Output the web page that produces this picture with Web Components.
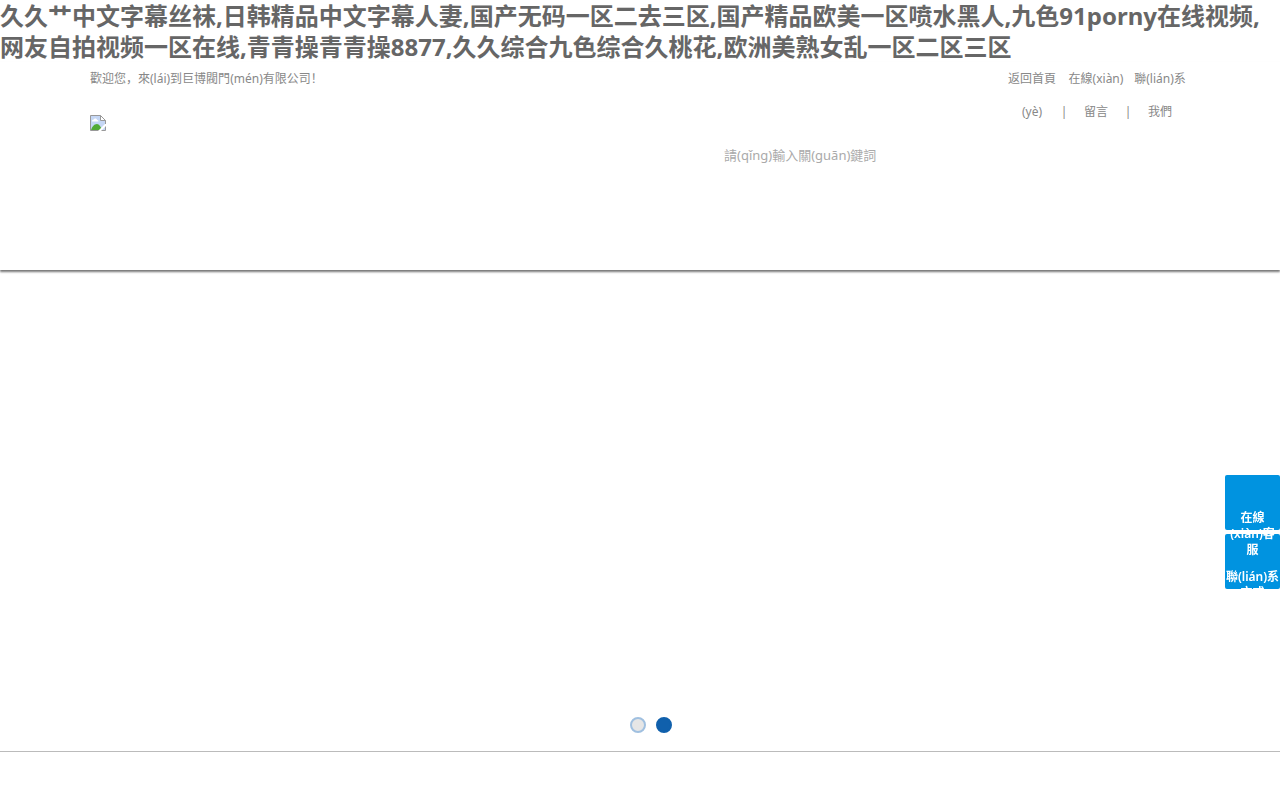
<!DOCTYPE html>
<html lang="zh">
<head>
<meta charset="utf-8">
<title>巨博閥門</title>
<style>
body { margin: 0; background: #fff; color: #666; font: 12px/16px "Noto Sans", "Noto Sans CJK SC", sans-serif; overflow-x: hidden; }
</style>
</head>
<body>
<site-page></site-page>
<script>
const define = (name, html) => {
  const template = document.createElement('template');
  template.innerHTML = html;
  customElements.define(name, class extends HTMLElement {
    constructor() {
      super();
      this.attachShadow({ mode: 'open' }).append(template.content.cloneNode(true));
    }
  });
};

define('page-title', `
<style>
:host { display: block; }
h1 { margin: 0; font-size: 24px; line-height: 31px; font-weight: 700; color: #666; }
</style>
<h1><slot></slot></h1>`);

define('top-nav', `
<style>
:host { display: block; }
nav { display: flex; align-items: flex-end; justify-content: flex-end; line-height: 33px; color: #888; }
a { width: 60px; text-align: center; color: inherit; text-decoration: none; }
span { width: 4px; display: flex; justify-content: center; }
</style>
<nav>
  <a href="#home">返回首頁(yè)</a><span>|</span>
  <a href="#message">在線(xiàn)留言</a><span>|</span>
  <a href="#contact">聯(lián)系我們</a>
</nav>`);

define('search-box', `
<style>
:host { display: block; }
input { display: block; box-sizing: border-box; width: 100%; height: 30px; padding: 0; border: 0; outline: 0; background: none; font: inherit; font-size: 13px; color: #666; }
input::placeholder { color: #aaa; opacity: 1; }
</style>
<input type="search" aria-label="搜索" placeholder="請(qǐng)輸入關(guān)鍵詞">`);

define('site-logo', `
<style>
:host { display: block; }
a, svg { display: block; width: 16px; height: 16px; }
</style>
<a href="#home" aria-label="首頁">
<svg viewBox="0 0 16 16">
  <path d="M.5.5h10l5 5v10H.5z" fill="#c5d7f5"/>
  <path d="M2 6c0-1 1-1.500 2-1.500C4 3 7 3 7 5c1 0 1.500.5 1.500 1.500H2z" fill="#fff"/>
  <path d="M1 15c1-3 3-6 6-6 2 0 4 3 5 6z" fill="#52ab35"/>
  <path d="M.5 15.500V.5h10l5 5v10H.5" fill="none" stroke="#999"/>
  <path d="M10.500.5v5h5z" fill="#fff" stroke="#999"/>
  <path d="M8 16 15 9h1v2l-5 5z" fill="#fff"/>
</svg></a>`);

define('site-header', `
<style>
:host { display: block; height: 208px; box-shadow: 0 2px 2px #777; background: #fff; }
.inner { display: flex; justify-content: space-between; max-width: 1100px; margin: 0 auto; }
p { margin: 0 0 20px; line-height: 33px; color: #888; }
.side { width: 466px; }
search-box { margin-top: 12px; width: 300px; }
</style>
<div class="inner">
  <div><p>歡迎您，來(lái)到巨博閥門(mén)有限公司！</p><site-logo></site-logo></div>
  <div class="side"><top-nav></top-nav><search-box></search-box></div>
</div>`);

define('hero-slider', `
<style>
:host { display: flex; align-items: flex-end; justify-content: center; gap: 10px; height: 482px; box-sizing: border-box; padding: 0 0 18px 22px; border-bottom: 1px solid #bbb; }
button { box-sizing: border-box; width: 16px; height: 16px; padding: 0; border: 2px solid #a0c0e0; border-radius: 50%; background: #e6e6e6; }
button.on { border-color: #1060ac; background: #1060ac; }
</style>
<button aria-label="1"></button><button class="on" aria-label="2"></button>`);

define('side-tools', `
<style>
:host { position: fixed; right: 0; top: 475px; width: 55px; display: grid; gap: 4px; }
a { display: block; box-sizing: border-box; height: 55px; padding-top: 35px; border-radius: 2px; background: #0093e0; color: #fff; text-align: center; text-decoration: none; font-weight: 600; white-space: nowrap; }
span { position: relative; z-index: 1; display: block; }
</style>
<a href="#service"><span>在線<br>(xiàn)客<br>服</span></a>
<a href="#contact"><span>聯(lián)系<br>方式</span></a>`);

define('site-page', `
<style>:host { display: block; }</style>
<page-title>久久艹中文字幕丝袜,日韩精品中文字幕人妻,国产无码一区二去三区,国产精品欧美一区喷水黑人,九色91porny在线视频,网友自拍视频一区在线,青青操青青操8877,久久综合九色综合久桃花,欧洲美熟女乱一区二区三区</page-title>
<site-header></site-header>
<hero-slider></hero-slider>
<side-tools></side-tools>`);
</script>
</body>
</html>
